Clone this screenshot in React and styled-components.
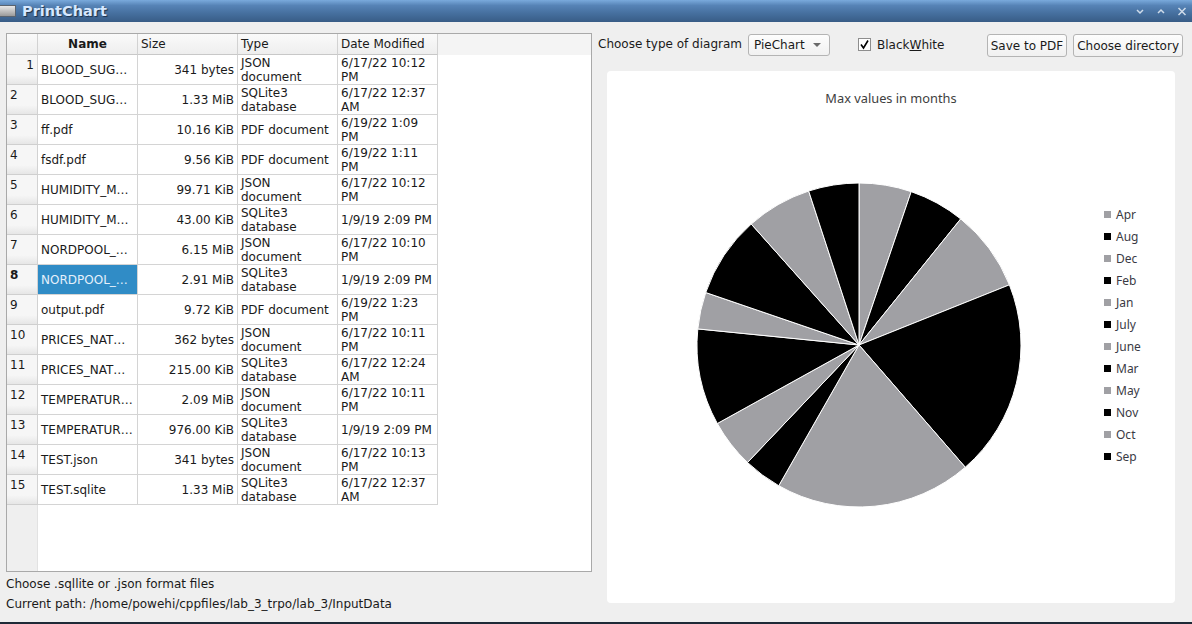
import React from "react";
import styled, { createGlobalStyle } from "styled-components";

const Global = createGlobalStyle`
  html, body { margin: 0; padding: 0; }
  body { font-family: "DejaVu Sans", "Noto Sans", sans-serif; font-size: 12px; color: #1a1a1a; background: #efefef; }
  * { box-sizing: border-box; }
`;

const Window = styled.div`
  width: 1192px;
  height: 624px;
  display: flex;
  flex-direction: column;
  background: #efefef;
  overflow: hidden;
`;

const TitleBar = styled.div`
  height: 22px;
  flex: none;
  display: flex;
  align-items: center;
  background: linear-gradient(#7aaadc 0%, #5683b6 25%, #46709f 60%, #385c86 100%);
  padding-right: 4px;
`;

const AppIcon = styled.div`
  width: 16px;
  height: 12px;
  background: linear-gradient(#e8e8e8, #9a9a9a);
  border: 1px solid #5a6470;
  border-left: none;
`;

const TitleText = styled.div`
  margin-left: 6px;
  font-family: "DejaVu Sans", sans-serif;
  font-weight: bold;
  font-size: 14.5px;
  color: #d6e8ff;
  text-shadow: 1px 1px 1px #1c2f48;
  flex: 1;
`;

const WinButtons = styled.div`
  display: flex;
  gap: 9px;
  align-items: center;
`;

const WinBtn = styled.svg`
  width: 12px;
  height: 12px;
  display: block;
`;

const Body = styled.div`
  flex: 1;
  display: flex;
  gap: 6px;
  padding: 11px 9px 8px 6px;
  min-height: 0;
`;

const BottomEdge = styled.div`
  height: 2px;
  flex: none;
  background: #1e2a37;
`;

const LeftCol = styled.div`
  width: 586px;
  display: flex;
  flex-direction: column;
`;

const TableFrame = styled.div`
  flex: 1;
  border: 1px solid #a9a9a9;
  background: #ffffff;
  display: flex;
  flex-direction: column;
  overflow: hidden;
`;

const HeaderRow = styled.div`
  display: flex;
  height: 21px;
  flex: none;
  background: #f4f4f4;
`;

const HeaderCell = styled.div`
  width: ${(p) => p.$w}px;
  flex: none;
  height: 21px;
  border-right: 1px solid #d2d2d2;
  border-bottom: 1px solid #c8c8c8;
  background: linear-gradient(#fafafa, #eeeeee);
  padding: 0 3px;
  display: flex;
  align-items: center;
  justify-content: ${(p) => (p.$center ? "center" : "flex-start")};
  font-weight: ${(p) => (p.$bold ? "bold" : "normal")};
  white-space: nowrap;
  overflow: hidden;
`;

const Row = styled.div`
  display: flex;
  height: 30px;
  flex: none;
`;

const RowHead = styled.div`
  width: 31px;
  flex: none;
  height: 30px;
  background: linear-gradient(#f6f6f6 70%, #e6e6e6);
  border-right: 1px solid #d2d2d2;
  border-bottom: 1px solid #cfcfcf;
  padding: 2px 3px 0 3px;
  text-align: ${(p) => (p.$right ? "right" : "left")};
  font-weight: ${(p) => (p.$bold ? "bold" : "normal")};
  line-height: 16px;
`;

const Cell = styled.div`
  width: 100px;
  flex: none;
  height: 30px;
  border-right: 1px solid #d4d4d4;
  border-bottom: 1px solid #d4d4d4;
  padding: 0 3px;
  display: flex;
  align-items: center;
  justify-content: ${(p) => (p.$right ? "flex-end" : "flex-start")};
  line-height: 14px;
  white-space: nowrap;
  overflow: hidden;
  background: ${(p) => (p.$sel ? "#308cc6" : "transparent")};
  color: ${(p) => (p.$sel ? "#e4f0fb" : "#1a1a1a")};
`;

const Filler = styled.div`
  flex: 1;
  display: flex;
`;

const VStrip = styled.div`
  width: 31px;
  background: #efefef;
  border-right: 1px solid #e2e2e2;
`;

const StatusLine = styled.div`
  height: 20px;
  line-height: 20px;
  white-space: nowrap;
`;

const StatusBlock = styled.div`
  padding-top: 2px;
`;

const RightCol = styled.div`
  flex: 1;
  display: flex;
  flex-direction: column;
`;

const Toolbar = styled.div`
  height: 23px;
  margin-top: 1px;
  display: flex;
  align-items: center;
`;

const ToolLabel = styled.div`
  margin-top: -4px;
  white-space: nowrap;
`;

const Combo = styled.div`
  margin-left: 6px;
  width: 82px;
  height: 22px;
  margin-top: -2px;
  border: 1px solid #b4b4b4;
  border-radius: 3px;
  background: linear-gradient(#fdfdfd, #f1f1f1);
  display: flex;
  align-items: center;
  padding: 0 4px 0 5px;
  justify-content: space-between;
`;

const Arrow = styled.div`
  width: 0;
  height: 0;
  border-left: 4px solid transparent;
  border-right: 4px solid transparent;
  border-top: 4px solid #6a6a6a;
  margin-right: 4px;
`;

const CheckWrap = styled.div`
  margin-left: 28px;
  margin-top: -2px;
  display: flex;
  align-items: center;
  gap: 6px;
  white-space: nowrap;
`;

const CheckBox = styled.div`
  width: 13px;
  height: 13px;
  border: 1px solid #8e8e8e;
  background: #fff;
  display: flex;
  align-items: center;
  justify-content: center;
`;

const Spacer = styled.div`
  flex: 1;
`;

const Buttons = styled.div`
  display: flex;
  gap: 6px;
`;

const Button = styled.div`
  height: 23px;
  padding: 0 3px;
  border: 1px solid #b4b4b4;
  border-radius: 3px;
  background: linear-gradient(#fdfdfd, #f0f0f0);
  display: flex;
  align-items: center;
  white-space: nowrap;
`;

const ChartPanel = styled.div`
  flex: 1;
  margin: 14px 8px 11px 9px;
  background: #ffffff;
  border-radius: 4px;
  display: flex;
  flex-direction: column;
  font-family: "Noto Sans", "DejaVu Sans", sans-serif;
  font-size: 12px;
`;

const ChartTitle = styled.div`
  padding-top: 18px;
  height: 36px;
  line-height: 18px;
  font-size: 12.8px;
  text-align: center;
  color: #404040;
`;

const PlotRow = styled.div`
  flex: 1;
  display: flex;
  align-items: center;
  padding: 0 0 20px 89px;
`;

const PieSvg = styled.svg`
  width: 326px;
  height: 326px;
  display: block;
  flex: none;
`;

const Legend = styled.div`
  margin-left: 82px;
  margin-bottom: 20px;
  display: flex;
  flex-direction: column;
`;

const LegendItem = styled.div`
  height: 22px;
  display: flex;
  align-items: center;
  gap: 5px;
  color: #3a3a44;
`;

const Marker = styled.div`
  width: 7px;
  height: 7px;
  background: ${(p) => p.$c};
`;

const rows = [
  ["BLOOD_SUG…", "341 bytes", ["JSON", "document"], ["6/17/22 10:12", "PM"]],
  ["BLOOD_SUG…", "1.33 MiB", ["SQLite3", "database"], ["6/17/22 12:37", "AM"]],
  ["ff.pdf", "10.16 KiB", ["PDF document"], ["6/19/22 1:09", "PM"]],
  ["fsdf.pdf", "9.56 KiB", ["PDF document"], ["6/19/22 1:11", "PM"]],
  ["HUMIDITY_M…", "99.71 KiB", ["JSON", "document"], ["6/17/22 10:12", "PM"]],
  ["HUMIDITY_M…", "43.00 KiB", ["SQLite3", "database"], ["1/9/19 2:09 PM"]],
  ["NORDPOOL_…", "6.15 MiB", ["JSON", "document"], ["6/17/22 10:10", "PM"]],
  ["NORDPOOL_…", "2.91 MiB", ["SQLite3", "database"], ["1/9/19 2:09 PM"]],
  ["output.pdf", "9.72 KiB", ["PDF document"], ["6/19/22 1:23", "PM"]],
  ["PRICES_NAT…", "362 bytes", ["JSON", "document"], ["6/17/22 10:11", "PM"]],
  ["PRICES_NAT…", "215.00 KiB", ["SQLite3", "database"], ["6/17/22 12:24", "AM"]],
  ["TEMPERATUR…", "2.09 MiB", ["JSON", "document"], ["6/17/22 10:11", "PM"]],
  ["TEMPERATUR…", "976.00 KiB", ["SQLite3", "database"], ["1/9/19 2:09 PM"]],
  ["TEST.json", "341 bytes", ["JSON", "document"], ["6/17/22 10:13", "PM"]],
  ["TEST.sqlite", "1.33 MiB", ["SQLite3", "database"], ["6/17/22 12:37", "AM"]],
];

const GRAY = "#a0a0a4";
const BLACK = "#000000";

const sliceBounds = [0, 18.8, 38.9, 68.2, 139, 209.7, 223.5, 241, 275.7, 288.9, 318.3, 341.9, 360];
const months = ["Apr", "Aug", "Dec", "Feb", "Jan", "July", "June", "Mar", "May", "Nov", "Oct", "Sep"];

function slicePath(a0, a1) {
  const cx = 163, cy = 163, r = 162;
  const p = (a) => {
    const rad = (a * Math.PI) / 180;
    return [cx + r * Math.sin(rad), cy - r * Math.cos(rad)];
  };
  const [x0, y0] = p(a0);
  const [x1, y1] = p(a1);
  const large = a1 - a0 > 180 ? 1 : 0;
  return `M${cx},${cy} L${x0.toFixed(2)},${y0.toFixed(2)} A${r},${r} 0 ${large} 1 ${x1.toFixed(2)},${y1.toFixed(2)} Z`;
}

const Lines = ({ items }) => (
  <div>
    {items.map((t, i) => (
      <div key={i}>{t}</div>
    ))}
  </div>
);

export default function App() {
  return (
    <>
      <Global />
      <Window>
        <TitleBar>
          <AppIcon />
          <TitleText>PrintChart</TitleText>
          <WinButtons>
            <WinBtn viewBox="0 0 12 12">
              <polyline points="3,5 6,8 9,5" fill="none" stroke="#cfdcea" strokeWidth="1.5" />
            </WinBtn>
            <WinBtn viewBox="0 0 12 12">
              <polyline points="3,8 6,5 9,8" fill="none" stroke="#cfdcea" strokeWidth="1.5" />
            </WinBtn>
            <WinBtn viewBox="0 0 12 12">
              <path d="M2.5,3 L9.5,10 M9.5,3 L2.5,10" fill="none" stroke="#cfdcea" strokeWidth="1.5" />
            </WinBtn>
          </WinButtons>
        </TitleBar>
        <Body>
          <LeftCol>
            <TableFrame>
              <HeaderRow>
                <HeaderCell $w={31} />
                <HeaderCell $w={100} $center $bold>Name</HeaderCell>
                <HeaderCell $w={100}>Size</HeaderCell>
                <HeaderCell $w={100}>Type</HeaderCell>
                <HeaderCell $w={100}>Date Modified</HeaderCell>
              </HeaderRow>
              {rows.map((r, i) => (
                <Row key={i}>
                  <RowHead $right={i === 0} $bold={i === 7}>{i + 1}</RowHead>
                  <Cell $sel={i === 7}>{r[0]}</Cell>
                  <Cell $right>{r[1]}</Cell>
                  <Cell><Lines items={r[2]} /></Cell>
                  <Cell><Lines items={r[3]} /></Cell>
                </Row>
              ))}
              <Filler>
                <VStrip />
              </Filler>
            </TableFrame>
            <StatusBlock>
              <StatusLine>Choose .sqllite or .json format files</StatusLine>
              <StatusLine>Current path: /home/powehi/cppfiles/lab_3_trpo/lab_3/InputData</StatusLine>
            </StatusBlock>
          </LeftCol>
          <RightCol>
            <Toolbar>
              <ToolLabel>Choose type of diagram</ToolLabel>
              <Combo>
                <span>PieChart</span>
                <Arrow />
              </Combo>
              <CheckWrap>
                <CheckBox>
                  <svg width="11" height="11" viewBox="0 0 11 11">
                    <polyline points="2,5.5 4.5,9 9,1.5" fill="none" stroke="#000" strokeWidth="1.6" />
                  </svg>
                </CheckBox>
                <span>
                  Black<u>W</u>hite
                </span>
              </CheckWrap>
              <Spacer />
              <Buttons>
                <Button>Save to PDF</Button>
                <Button>Choose directory</Button>
              </Buttons>
            </Toolbar>
            <ChartPanel>
              <ChartTitle>Max values in months</ChartTitle>
              <PlotRow>
                <PieSvg viewBox="0 0 326 326">
                  {months.map((m, i) => (
                    <path
                      key={m}
                      d={slicePath(sliceBounds[i], sliceBounds[i + 1])}
                      fill={i % 2 === 0 ? GRAY : BLACK}
                      stroke="#ffffff"
                      strokeWidth="1"
                      strokeLinejoin="round"
                    />
                  ))}
                </PieSvg>
                <Legend>
                  {months.map((m, i) => (
                    <LegendItem key={m}>
                      <Marker $c={i % 2 === 0 ? GRAY : BLACK} />
                      <span>{m}</span>
                    </LegendItem>
                  ))}
                </Legend>
              </PlotRow>
            </ChartPanel>
          </RightCol>
        </Body>
        <BottomEdge />
      </Window>
    </>
  );
}
